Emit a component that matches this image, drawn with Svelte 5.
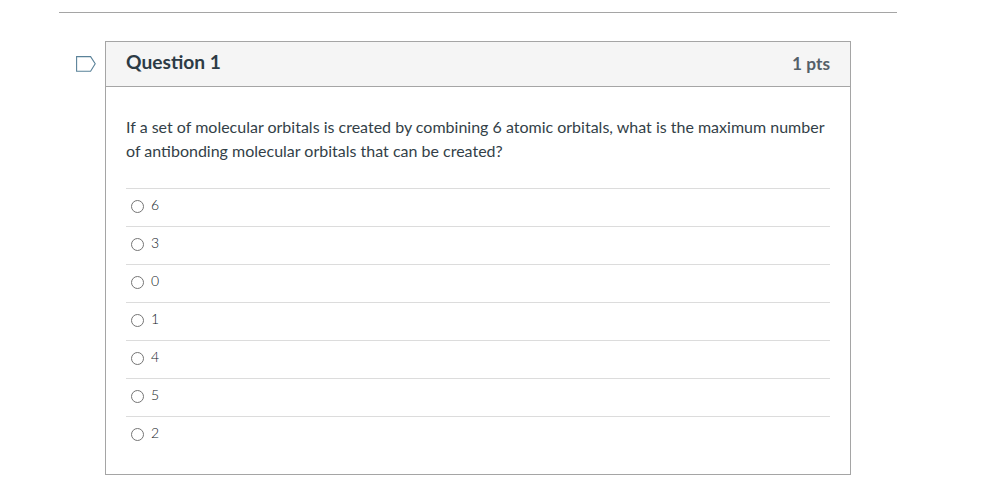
<script>
	const answers = ["6", "3", "0", "1", "4", "5", "2"];
</script>

<div class="page">
	<hr class="divider" />
	<div class="row">
		<div class="flag">
			<svg width="20" height="16" viewBox="0 0 20 16">
				<path d="M.6 .6H14.6L19.2 7.8L14.6 15.2H.6Z" fill="#fff" stroke="#5a8299" stroke-width="1.1" />
			</svg>
		</div>
		<section class="question">
			<header>
				<h2>Question 1</h2>
				<span class="pts">1 pts</span>
			</header>
			<div class="body">
				<p>If a set of molecular orbitals is created by combining 6 atomic orbitals, what is the maximum number of antibonding molecular orbitals that can be created?</p>
				<ul>
					{#each answers as a}
						<li>
							<span class="radio"></span>
							<span class="label">{a}</span>
						</li>
					{/each}
				</ul>
			</div>
		</section>
	</div>
</div>

<style>
	:global(body) {
		background: #fff;
		font-family: Lato, "Liberation Sans", sans-serif;
		color: #333f48;
		font-variant-ligatures: common-ligatures;
		text-rendering: optimizeLegibility;
	}

	.page {
		width: 985px;
		height: 495px;
		overflow: hidden;
		padding-top: 12px;
		box-sizing: border-box;
	}

	.divider {
		width: 838px;
		height: 1px;
		margin: 0 0 0 59px;
		border: 0;
		background: #a5a5a5;
	}

	.row {
		display: flex;
		margin-top: 28px;
		margin-left: 76px;
	}

	.flag {
		width: 29px;
		padding-top: 15px;
		flex: none;
	}

	svg {
		display: block;
	}

	.question {
		width: 744px;
		height: 432px;
		border: 1px solid #a5a5a5;
		flex: none;
	}

	header {
		height: 44px;
		display: flex;
		align-items: center;
		justify-content: space-between;
		padding: 0 20px;
		background: #f5f5f5;
		border-bottom: 1px solid #a5a5a5;
	}

	h2 {
		margin: 0 0 5px;
		font-size: 19.2px;
		font-weight: 700;
		color: #2d3b45;
	}

	.pts {
		margin-bottom: 2px;
		font-size: 17.3px;
		font-weight: 700;
		color: #545f68;
	}

	.body {
		padding: 28px 20px 0;
	}

	p {
		margin: 0;
		font-size: 16px;
		line-height: 24px;
	}

	ul {
		list-style: none;
		margin: 25px 0 0;
		padding: 0;
	}

	li {
		height: 37px;
		border-top: 1px solid #dcdcdc;
		display: flex;
		align-items: center;
		gap: 7px;
		padding-left: 5px;
		font-size: 14px;
	}

	.radio {
		width: 11px;
		height: 11px;
		border: 1px solid #757575;
		border-radius: 50%;
		margin-top: -3px;
	}

	.label {
		margin-top: -6px;
		font-weight: 300;
		color: #10181e;
	}
</style>
